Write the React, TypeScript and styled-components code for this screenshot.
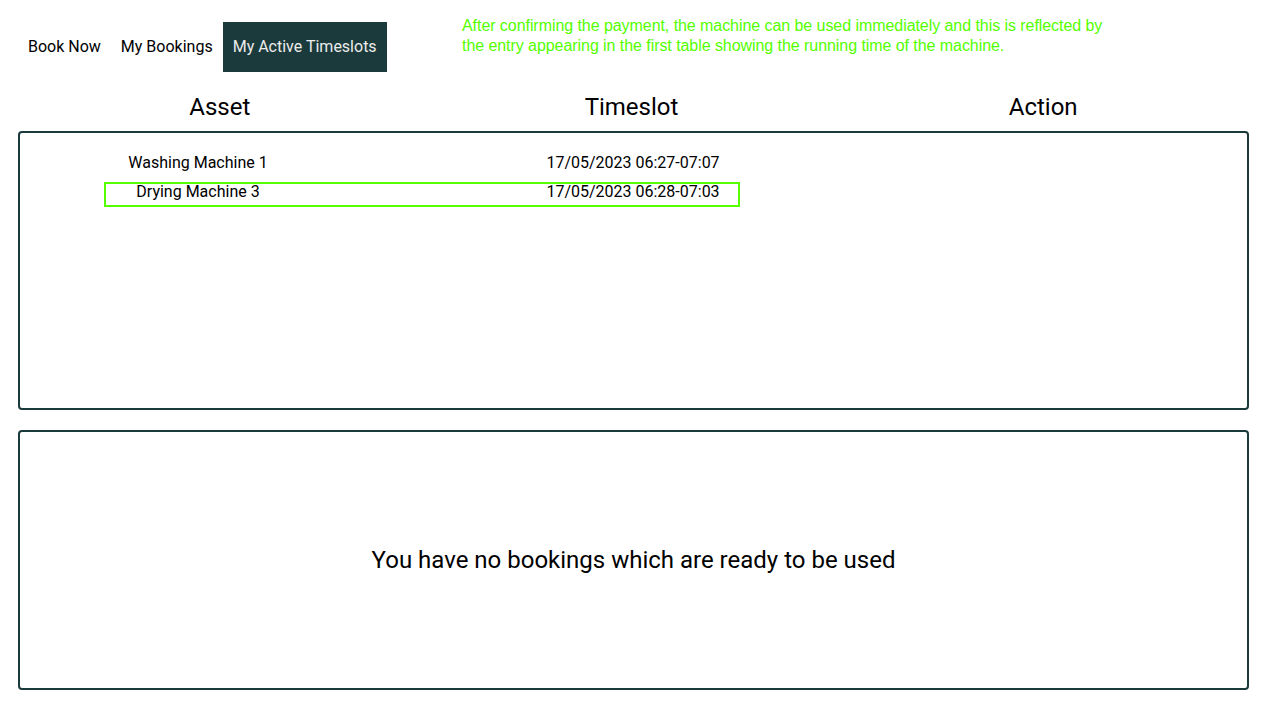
import React from "react";
import styled, { createGlobalStyle } from "styled-components";

const GlobalStyle = createGlobalStyle`
  html, body { margin: 0; padding: 0; background: #ffffff; }
  body { font-family: Roboto, "Noto Sans", sans-serif; color: #000; }
`;

const DARK = "#1b3a3b";
const GREEN = "#55ff00";

const Page = styled.div`
  position: relative;
  padding: 22px 14px 0 18px;
  display: flex;
  flex-direction: column;
`;

const Tabs = styled.nav`
  display: flex;
  height: 50px;
`;

const Tab = styled.div<{ $active?: boolean }>`
  display: flex;
  align-items: center;
  padding: 0 10px 1px;
  font-size: 16px;
  background: ${(p) => (p.$active ? DARK : "transparent")};
  color: ${(p) => (p.$active ? "#ececec" : "#000")};
`;

const Note = styled.p`
  position: absolute;
  left: 462px;
  top: 16px;
  width: 660px;
  margin: 0;
  font-family: "Liberation Sans", Arial, sans-serif;
  font-size: 16px;
  line-height: 20px;
  color: ${GREEN};
  letter-spacing: -0.06px;
`;

const HeaderRow = styled.div`
  display: grid;
  grid-template-columns: 1fr 1fr 1fr;
  margin: 21px 0 0 -4px;
  height: 38px;
  align-items: start;
`;

const HeaderCell = styled.div`
  text-align: center;
  font-size: 24px;
  line-height: 28px;
`;

const Box = styled.section<{ $height: number }>`
  box-sizing: border-box;
  height: ${(p) => p.$height}px;
  border: 2px solid ${DARK};
  border-radius: 4px;
`;

const Rows = styled.div`
  display: flex;
  flex-direction: column;
  gap: 8px;
  padding: 22px 0 0 86px;
`;

const Row = styled.div<{ $highlight?: boolean }>`
  display: grid;
  grid-template-columns: 184px 1fr 210px;
  width: 632px;
  height: 21px;
  font-size: 16px;
  line-height: 16px;
  outline: ${(p) => (p.$highlight ? `2px solid ${GREEN}` : "none")};
`;

const Cell = styled.div`
  text-align: center;
  white-space: nowrap;
`;

const EmptyBox = styled(Box)`
  margin-top: 20px;
  display: flex;
  align-items: center;
  justify-content: center;
  font-size: 24px;
`;

const bookings = [
  { asset: "Washing Machine 1", slot: "17/05/2023 06:27-07:07" },
  { asset: "Drying Machine 3", slot: "17/05/2023 06:28-07:03", highlight: true },
];

export default function App() {
  return (
    <>
      <GlobalStyle />
      <Page>
        <Tabs>
          <Tab>Book Now</Tab>
          <Tab>My Bookings</Tab>
          <Tab $active>My Active Timeslots</Tab>
        </Tabs>
        <Note>
          After confirming the payment, the machine can be used immediately and this is reflected by
          <br />
          the entry appearing in the first table showing the running time of the machine.
        </Note>
        <HeaderRow>
          <HeaderCell>Asset</HeaderCell>
          <HeaderCell>Timeslot</HeaderCell>
          <HeaderCell>Action</HeaderCell>
        </HeaderRow>
        <Box $height={279}>
          <Rows>
            {bookings.map((b) => (
              <Row key={b.asset} $highlight={b.highlight}>
                <Cell>{b.asset}</Cell>
                <span />
                <Cell>{b.slot}</Cell>
              </Row>
            ))}
          </Rows>
        </Box>
        <EmptyBox $height={260}>You have no bookings which are ready to be used</EmptyBox>
      </Page>
    </>
  );
}
